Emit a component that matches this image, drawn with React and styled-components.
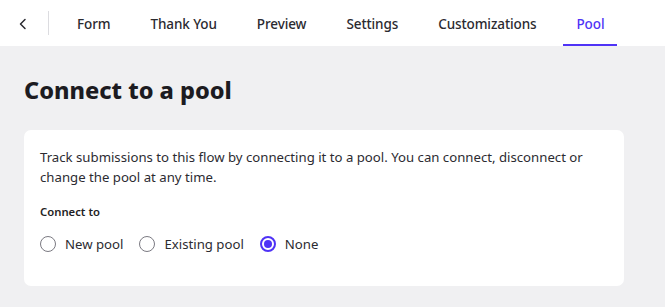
import React, { useState } from "react";
import styled, { createGlobalStyle } from "styled-components";

const GlobalStyle = createGlobalStyle`
  html, body {
    margin: 0;
    padding: 0;
    background: #f0f0f2;
    font-family: "Noto Sans", "Open Sans", sans-serif;
    color: #1f1e24;
  }
`;

const Page = styled.div`
  width: 665px;
  min-height: 307px;
  background: #f0f0f2;
`;

const Header = styled.header`
  height: 46px;
  background: #ffffff;
  display: flex;
  align-items: stretch;
`;

const BackButton = styled.button`
  width: 48px;
  border: none;
  background: transparent;
  padding: 2px 2px 0 0;
  display: flex;
  align-items: center;
  justify-content: center;
  cursor: pointer;
  color: #2a2a30;
`;

const Divider = styled.div`
  width: 1px;
  background: #dcdce0;
  margin: 11px 15px 11px 0;
`;

const Tabs = styled.nav`
  display: flex;
  gap: 14px;
`;

const Tab = styled.div`
  position: relative;
  display: flex;
  align-items: center;
  padding: 1px 13px 0;
  font-size: 13.5px;
  font-weight: 500;
  letter-spacing: -0.1px;
  color: ${(p) => (p.$active ? "#4f33f6" : "#2b2a30")};
  cursor: pointer;
  &::after {
    content: "";
    display: ${(p) => (p.$active ? "block" : "none")};
    position: absolute;
    left: 0;
    right: 0;
    bottom: 0;
    height: 2px;
    background: #4f33f6;
  }
`;

const Main = styled.main`
  padding: 0 41px 0 24px;
`;

const Title = styled.h1`
  margin: 0;
  padding: 29px 0 25px;
  font-size: 23.5px;
  line-height: 30px;
  font-weight: 800;
  color: #1c1b21;
`;

const Card = styled.section`
  background: #ffffff;
  border-radius: 7px;
  padding: 17px 16px 32px;
`;

const Description = styled.p`
  margin: 0 0 17px;
  font-size: 13.2px;
  line-height: 20px;
  color: #2c2b31;
`;

const Label = styled.div`
  font-size: 11.3px;
  font-weight: 600;
  line-height: 16px;
  margin-bottom: 14px;
  color: #1f1e24;
`;

const RadioGroup = styled.div`
  display: flex;
  gap: 16px;
`;

const RadioOption = styled.label`
  display: flex;
  align-items: center;
  gap: 9px;
  font-size: 13.2px;
  color: #2c2b31;
  cursor: pointer;
  line-height: 20px;
`;

const Circle = styled.span`
  box-sizing: border-box;
  width: 16px;
  height: 16px;
  border-radius: 50%;
  border: ${(p) => (p.$checked ? "2px solid #4f33f6" : "1.5px solid #7b7a82")};
  display: flex;
  align-items: center;
  justify-content: center;
  &::after {
    content: "";
    display: ${(p) => (p.$checked ? "block" : "none")};
    width: 8px;
    height: 8px;
    border-radius: 50%;
    background: #4f33f6;
  }
`;

const tabs = ["Form", "Thank You", "Preview", "Settings", "Customizations", "Pool"];
const options = ["New pool", "Existing pool", "None"];

export default function App() {
  const [choice, setChoice] = useState("None");
  return (
    <Page>
      <GlobalStyle />
      <Header>
        <BackButton aria-label="Back">
          <svg width="14" height="14" viewBox="0 0 14 14" fill="none">
            <path d="M9 2.5 4.5 7 9 11.5" stroke="currentColor" strokeWidth="1.5" strokeLinecap="round" strokeLinejoin="round" />
          </svg>
        </BackButton>
        <Divider />
        <Tabs>
          {tabs.map((t) => (
            <Tab key={t} $active={t === "Pool"}>
              {t}
            </Tab>
          ))}
        </Tabs>
      </Header>
      <Main>
        <Title>Connect to a pool</Title>
        <Card>
          <Description>
            Track submissions to this flow by connecting it to a pool. You can connect, disconnect or
            change the pool at any time.
          </Description>
          <Label>Connect to</Label>
          <RadioGroup>
            {options.map((o) => (
              <RadioOption key={o} onClick={() => setChoice(o)}>
                <Circle $checked={choice === o} />
                {o}
              </RadioOption>
            ))}
          </RadioGroup>
        </Card>
      </Main>
    </Page>
  );
}
